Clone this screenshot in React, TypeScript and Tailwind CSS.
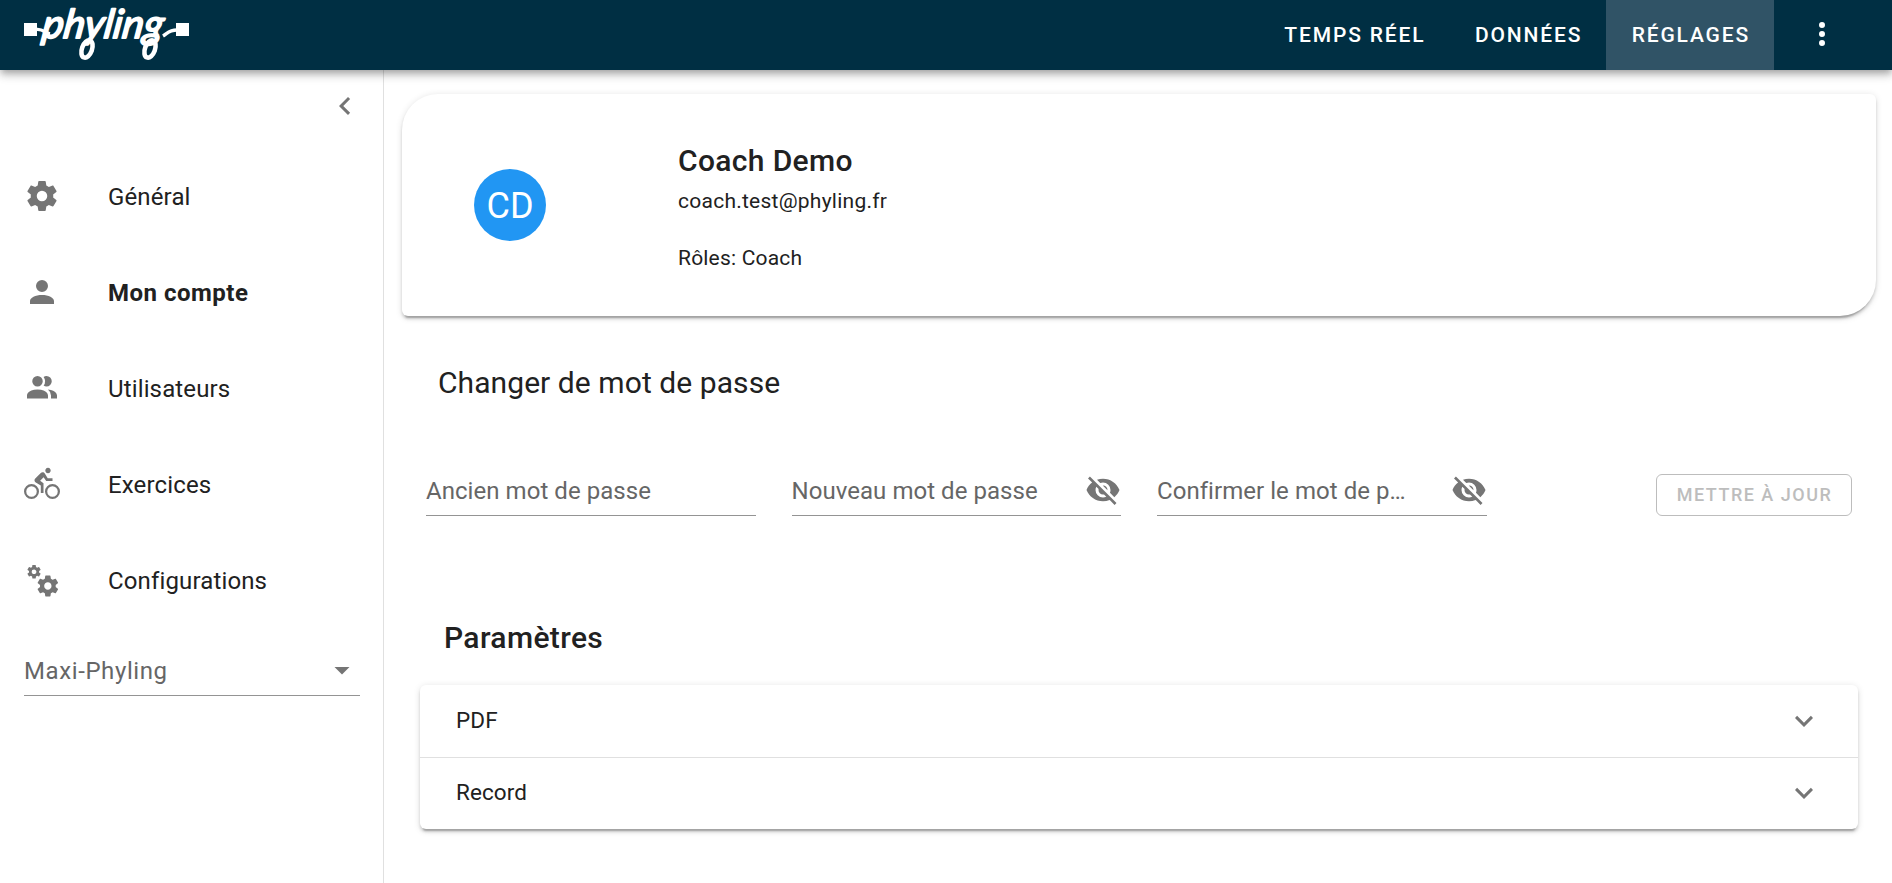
import type { ReactNode } from "react";

const ICONS = {
  cog: "M12,15.5A3.5,3.5 0 0,1 8.5,12A3.5,3.5 0 0,1 12,8.5A3.5,3.5 0 0,1 15.5,12A3.5,3.5 0 0,1 12,15.5M19.43,12.97C19.47,12.65 19.5,12.33 19.5,12C19.5,11.67 19.47,11.34 19.43,11L21.54,9.37C21.73,9.22 21.78,8.95 21.66,8.73L19.66,5.27C19.54,5.05 19.27,4.96 19.05,5.05L16.56,6.05C16.04,5.66 15.5,5.32 14.87,5.07L14.5,2.42C14.46,2.18 14.25,2 14,2H10C9.75,2 9.54,2.18 9.5,2.42L9.13,5.07C8.5,5.32 7.96,5.66 7.44,6.05L4.95,5.05C4.73,4.96 4.46,5.05 4.34,5.27L2.34,8.73C2.21,8.95 2.27,9.22 2.46,9.37L4.57,11C4.53,11.34 4.5,11.67 4.5,12C4.5,12.33 4.53,12.65 4.57,12.97L2.46,14.63C2.27,14.78 2.21,15.05 2.34,15.27L4.34,18.73C4.46,18.95 4.73,19.03 4.95,18.95L7.44,17.94C7.96,18.34 8.5,18.68 9.13,18.93L9.5,21.58C9.54,21.82 9.75,22 10,22H14C14.25,22 14.46,21.82 14.5,21.58L14.87,18.93C15.5,18.67 16.04,18.34 16.56,17.94L19.05,18.95C19.27,19.03 19.54,18.95 19.66,18.73L21.66,15.27C21.78,15.05 21.73,14.78 21.54,14.63L19.43,12.97Z",
  account:
    "M12,4A4,4 0 0,1 16,8A4,4 0 0,1 12,12A4,4 0 0,1 8,8A4,4 0 0,1 12,4M12,14C16.42,14 20,15.79 20,18V20H4V18C4,15.79 7.58,14 12,14Z",
  accounts:
    "M16 17V19H2V17S2 13 9 13 16 17 16 17M12.5 7.5A3.5 3.5 0 1 0 9 11A3.5 3.5 0 0 0 12.5 7.5M15.94 13A5.32 5.32 0 0 1 18 17V19H22V17S22 13.37 15.94 13M15 4A3.39 3.39 0 0 0 13.07 4.59A5 5 0 0 1 13.07 10.41A3.39 3.39 0 0 0 15 11A3.5 3.5 0 0 0 15 4Z",
  bike: "M5,20.5A3.5,3.5 0 0,1 1.5,17A3.5,3.5 0 0,1 5,13.5A3.5,3.5 0 0,1 8.5,17A3.5,3.5 0 0,1 5,20.5M5,12A5,5 0 0,0 0,17A5,5 0 0,0 5,22A5,5 0 0,0 10,17A5,5 0 0,0 5,12M14.8,10H19V8.2H15.8L13.86,4.93C13.57,4.43 13,4.1 12.4,4.1C11.93,4.1 11.5,4.29 11.2,4.6L7.5,8.29C7.19,8.6 7,9 7,9.5C7,10.13 7.33,10.66 7.85,10.97L11.2,13V18H13V11.5L10.75,9.85L13.07,7.5M19,20.5A3.5,3.5 0 0,1 15.5,17A3.5,3.5 0 0,1 19,13.5A3.5,3.5 0 0,1 22.5,17A3.5,3.5 0 0,1 19,20.5M19,12A5,5 0 0,0 14,17A5,5 0 0,0 19,22A5,5 0 0,0 24,17A5,5 0 0,0 19,12M16,4.8C17,4.8 17.8,4 17.8,3C17.8,2 17,1.2 16,1.2C15,1.2 14.2,2 14.2,3C14.2,4 15,4.8 16,4.8Z",
  cogs: "M15.9,18.45C17.25,18.45 18.35,17.35 18.35,16C18.35,14.65 17.25,13.55 15.9,13.55C14.54,13.55 13.45,14.65 13.45,16C13.45,17.35 14.54,18.45 15.9,18.45M21.1,16.68L22.58,17.84C22.71,17.95 22.75,18.13 22.66,18.29L21.26,20.71C21.17,20.86 21,20.92 20.83,20.86L19.09,20.16C18.73,20.44 18.33,20.67 17.91,20.85L17.64,22.7C17.62,22.87 17.47,23 17.3,23H14.5C14.32,23 14.18,22.87 14.15,22.7L13.89,20.85C13.46,20.67 13.07,20.44 12.71,20.16L10.96,20.86C10.81,20.92 10.62,20.86 10.54,20.71L9.14,18.29C9.05,18.13 9.09,17.95 9.22,17.84L10.7,16.68L10.65,16L10.7,15.31L9.22,14.16C9.09,14.05 9.05,13.86 9.14,13.71L10.54,11.29C10.62,11.13 10.81,11.07 10.96,11.13L12.71,11.84C13.07,11.56 13.46,11.32 13.89,11.15L14.15,9.29C14.18,9.13 14.32,9 14.5,9H17.3C17.47,9 17.62,9.13 17.64,9.29L17.91,11.15C18.33,11.32 18.73,11.56 19.09,11.84L20.83,11.13C21,11.07 21.17,11.13 21.26,11.29L22.66,13.71C22.75,13.86 22.71,14.05 22.58,14.16L21.1,15.31L21.15,16L21.1,16.68M6.69,8.07C7.56,8.07 8.26,7.37 8.26,6.5C8.26,5.63 7.56,4.92 6.69,4.92A1.58,1.58 0 0,0 5.11,6.5C5.11,7.37 5.82,8.07 6.69,8.07M10.03,6.94L11,7.68C11.07,7.75 11.09,7.87 11.03,7.97L10.13,9.53C10.08,9.63 9.96,9.67 9.86,9.63L8.74,9.18L8,9.62L7.81,10.81C7.79,10.92 7.7,11 7.59,11H5.79C5.67,11 5.58,10.92 5.56,10.81L5.4,9.62L4.64,9.18L3.52,9.63C3.41,9.67 3.3,9.63 3.24,9.53L2.34,7.97C2.28,7.87 2.31,7.75 2.39,7.68L3.34,6.94L3.31,6.5L3.34,6.06L2.39,5.32C2.31,5.25 2.28,5.13 2.34,5.03L3.24,3.47C3.3,3.37 3.41,3.33 3.52,3.37L4.63,3.82L5.4,3.38L5.56,2.19C5.58,2.08 5.67,2 5.79,2H7.59C7.7,2 7.79,2.08 7.81,2.19L8,3.38L8.74,3.82L9.86,3.37C9.96,3.33 10.08,3.37 10.13,3.47L11.03,5.03C11.09,5.13 11.07,5.25 11,5.32L10.03,6.06L10.06,6.5L10.03,6.94Z",
  eyeOff:
    "M11.83,9L15,12.16C15,12.11 15,12.05 15,12A3,3 0 0,0 12,9C11.94,9 11.89,9 11.83,9M7.53,9.8L9.08,11.35C9.03,11.56 9,11.77 9,12A3,3 0 0,0 12,15C12.22,15 12.44,14.97 12.65,14.92L14.2,16.47C13.53,16.8 12.79,17 12,17A5,5 0 0,1 7,12C7,11.21 7.2,10.47 7.53,9.8M2,4.27L4.28,6.55L4.73,7C3.08,8.3 1.78,10 1,12C2.73,16.39 7,19.5 12,19.5C13.55,19.5 15.03,19.2 16.38,18.66L16.81,19.08L19.73,22L21,20.73L3.27,3M12,7A5,5 0 0,1 17,12C17,12.64 16.87,13.26 16.64,13.82L19.57,16.75C21.07,15.5 22.27,13.86 23,12C21.27,7.61 17,4.5 12,4.5C10.6,4.5 9.26,4.75 8,5.2L10.17,7.35C10.74,7.13 11.35,7 12,7Z",
  chevronLeft: "M15.41,16.58L10.83,12L15.41,7.41L14,6L8,12L14,18L15.41,16.58Z",
  chevronDown: "M7.41,8.58L12,13.17L16.59,8.58L18,10L12,16L6,10L7.41,8.58Z",
  menuDown: "M7,10L12,15L17,10H7Z",
  dots: "M12,16A2,2 0 0,1 14,18A2,2 0 0,1 12,20A2,2 0 0,1 10,18A2,2 0 0,1 12,16M12,10A2,2 0 0,1 14,12A2,2 0 0,1 12,14A2,2 0 0,1 10,12A2,2 0 0,1 12,10M12,4A2,2 0 0,1 14,6A2,2 0 0,1 12,8A2,2 0 0,1 10,6A2,2 0 0,1 12,4Z",
};

function Icon({ name }: { name: keyof typeof ICONS }) {
  return (
    <svg viewBox="0 0 24 24" className="size-9 shrink-0 fill-current" aria-hidden="true">
      <path d={ICONS[name]} />
    </svg>
  );
}

function Logo() {
  return (
    <svg viewBox="0 0 165 70" className="h-[70px] w-[165px]" aria-label="phyling">
      <rect x="0" y="23" width="13" height="13" fill="#fff" />
      <rect x="152" y="23" width="13" height="13" fill="#fff" />
      <path d="M12 29.5C19 28.5 21 33 26 34M153 30C145 30 144 33 139 36" fill="none" stroke="#fff" strokeWidth="3.4" />
      <g fill="none" stroke="#fff" strokeWidth="4.6">
        <ellipse cx="63" cy="49" rx="5" ry="9" transform="rotate(20 63 49)" />
        <ellipse cx="126" cy="49" rx="5" ry="9" transform="rotate(20 126 49)" />
      </g>
      <text
        transform="translate(17 38) skewX(-8)"
        textLength="121"
        lengthAdjust="spacingAndGlyphs"
        className="fill-white stroke-white font-['Lato',sans-serif] text-[40px] italic"
        strokeWidth="1.8"
        strokeLinejoin="round"
      >
        phyling
      </text>
    </svg>
  );
}

const NAV = [
  { label: "TEMPS RÉEL", active: false },
  { label: "DONNÉES", active: false },
  { label: "RÉGLAGES", active: true },
];

const MENU: { label: string; icon: keyof typeof ICONS; active?: boolean }[] = [
  { label: "Général", icon: "cog" },
  { label: "Mon compte", icon: "account", active: true },
  { label: "Utilisateurs", icon: "accounts" },
  { label: "Exercices", icon: "bike" },
  { label: "Configurations", icon: "cogs" },
];

function Field({ children, secret }: { children: ReactNode; secret?: boolean }) {
  return (
    <div className="flex h-12 w-[329.5px] items-center border-b border-[#949494] pb-[3px] text-[#666]">
      <span className="min-w-0 flex-1 whitespace-nowrap pt-[2px] text-2xl tracking-[0.05px]">{children}</span>
      {secret && (
        <span className="flex text-[#757575]">
          <Icon name="eyeOff" />
        </span>
      )}
    </div>
  );
}

const ELEVATION =
  "shadow-[0_4.5px_1.5px_-3px_rgba(0,0,0,0.2),0_3px_3px_0_rgba(0,0,0,0.14),0_1.5px_7.5px_0_rgba(0,0,0,0.12)]";

export default function App() {
  return (
    <div className="flex h-[883px] flex-col overflow-hidden bg-white font-['Roboto',sans-serif] text-[#212121]">
      <header className="z-10 flex h-[70px] shrink-0 items-stretch bg-[#002f43] pl-6 text-white shadow-[0_3px_6px_-1.5px_rgba(0,0,0,0.2),0_6px_7.5px_0_rgba(0,0,0,0.14),0_1.5px_15px_0_rgba(0,0,0,0.12)]">
        <Logo />
        <nav className="ml-auto flex">
          {NAV.map((item) => (
            <a
              key={item.label}
              className={`flex items-center pl-[25.4px] pr-6 pt-[2px] text-[21px] font-medium tracking-[0.0880em] ${item.active ? "bg-[#305366]" : ""}`}
            >
              {item.label}
            </a>
          ))}
        </nav>
        <button className="ml-[30px] mr-[52px] flex h-[68px] items-center">
          <Icon name="dots" />
        </button>
      </header>

      <div className="flex min-h-0 flex-1">
        <aside className="flex w-96 shrink-0 flex-col border-r border-[#e0e0e0] pl-6 pr-[23px]">
          <div className="-mr-[3px] flex justify-end pt-[18px] text-[#757575]">
            <Icon name="chevronLeft" />
          </div>
          <ul className="mt-6">
            {MENU.map((item) => (
              <li key={item.label} className="flex h-24 items-center gap-12">
                <span className="text-[#757575]">
                  <Icon name={item.icon} />
                </span>
                <span className={`pt-[2px] text-2xl ${item.active ? "font-bold tracking-[0.5px]" : "tracking-[0.14px]"}`}>
                  {item.label}
                </span>
              </li>
            ))}
          </ul>
          <div className="mt-4 flex h-[52px] items-center justify-between border-b border-[#949494] text-2xl tracking-[0.6px] text-[#666]">
            <span className="pt-[2px]">Maxi-Phyling</span>
            <span className="text-[#757575]">
              <Icon name="menuDown" />
            </span>
          </div>
        </aside>

        <main className="flex min-w-0 flex-1 flex-col pl-[18px] pr-4 pt-6">
          <section
            className={`flex h-[222px] shrink-0 items-center rounded-md rounded-br-[36px] rounded-tl-[36px] pl-[72px] ${ELEVATION}`}
          >
            <div className="flex size-[72px] items-center justify-center rounded-full bg-[#2196f3] pt-[2px] text-4xl text-white">
              CD
            </div>
            <div className="ml-[132px] flex flex-col">
              <h1 className="text-[30px] font-medium leading-12 tracking-[0.0115em]">Coach Demo</h1>
              <p className="text-[21px] leading-8 tracking-[0.25px]">coach.test@phyling.fr</p>
              <p className="mt-[25px] text-[21px] leading-8 tracking-[0.2px]">Rôles: Coach</p>
            </div>
          </section>

          <h2 className="ml-9 mt-[43px] text-[30px] leading-12 tracking-[0.07px]">Changer de mot de passe</h2>

          <form className="ml-6 mr-6 mt-[61px] flex items-start gap-9">
            <Field>Ancien mot de passe</Field>
            <Field secret>Nouveau mot de passe</Field>
            <Field secret>Confirmer le mot de p…</Field>
            <button
              type="button"
              className="ml-auto mt-[6px] flex h-[42px] w-[196px] items-center justify-center rounded-md border border-[#bdbdbd] pl-px text-lg font-medium tracking-[1.5px] text-[#bdbdbd]"
            >
              METTRE À JOUR
            </button>
          </form>

          <h2 className="ml-[42px] mt-[98px] text-[30px] font-medium leading-12 tracking-[0.0125em]">Paramètres</h2>

          <section className={`ml-[18px] mr-[18px] mt-[23px] rounded-md text-[22.5px] tracking-[0.1px] ${ELEVATION}`}>
            <div className="flex h-18 items-center justify-between px-9">
              PDF
              <span className="text-[#757575]">
                <Icon name="chevronDown" />
              </span>
            </div>
            <div className="flex h-18 items-center justify-between px-9 shadow-[inset_0_1px_0_#e0e0e0]">
              Record
              <span className="text-[#757575]">
                <Icon name="chevronDown" />
              </span>
            </div>
          </section>
        </main>
      </div>
    </div>
  );
}
